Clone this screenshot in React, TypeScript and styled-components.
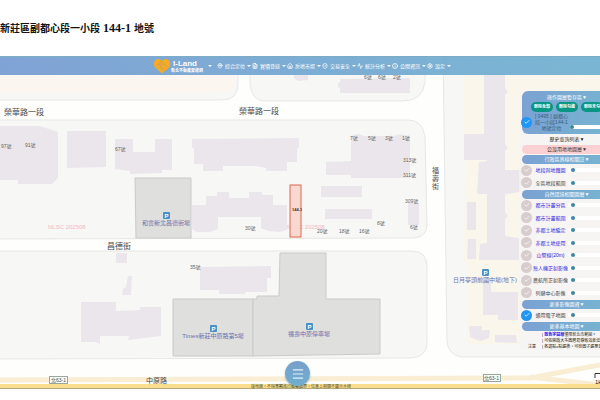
import React from "react";
import styled, { createGlobalStyle, css } from "styled-components";
import { MapPin, FileText, House, ShieldCheck, Activity, Info, Settings, Check, Menu } from "lucide-react";

const GlobalStyle = createGlobalStyle`
  * { box-sizing: border-box; }
  body { margin: 0; background: #fff; overflow-x: hidden; }
  body, button, input { font-family: "Liberation Sans", "Noto Sans CJK TC", sans-serif; }
`;

const blend = "linear-gradient(100deg, #7ba1d3, #76b5d1)";

const Page = styled.main`
  overflow: hidden;
`;

const Title = styled.h1`
  margin: 0;
  padding: 20px 0;
  height: 56px;
  font: bold 10px/16px "Liberation Serif", "Noto Sans CJK TC", serif;
  color: #111;
  white-space: nowrap;
`;

const Parcel = styled.span`
  font-size: 12px;
`;

const MapFrame = styled.section`
  position: relative;
  overflow: hidden;
`;

const MapDrawing = styled.svg`
  display: block;
  width: 100%;
  height: auto;
  font-family: "Liberation Sans", "Noto Sans CJK TC", sans-serif;
`;

const TopBar = styled.header`
  position: absolute;
  inset: 0 0 auto;
  height: 19px;
  display: flex;
  align-items: center;
  padding-left: 153px;
  color: #fff;
  background: linear-gradient(90deg, #7ba0d4, #75b4d2);
  border-top: 1px solid #78a9c4;
  opacity: 0.96;
`;

const Brand = styled.a`
  display: flex;
  align-items: center;
  color: #fff;
  text-decoration: none;
  width: 54px;
`;

const BrandText = styled.span`
  display: grid;
  font: bold 4px/5px "Liberation Sans", "Noto Sans CJK TC", sans-serif;
  white-space: nowrap;
`;

const BrandName = styled.strong`
  padding-left: 2px;
  font-size: 8px;
  line-height: 9px;
`;

const Nav = styled.nav`
  display: flex;
  align-items: center;
`;

const NavButton = styled.button`
  display: flex;
  align-items: center;
  gap: 2px;
  width: 35px;
  padding: 0;
  border: 0;
  background: none;
  color: #fff;
  font-size: 5px;
  line-height: 8px;
  white-space: nowrap;
`;

const Caret = styled.span`
  border: 1px solid transparent;
  border-top: 2px solid #fff;
  border-bottom: 0;
  border-left-width: 2px;
  border-right-width: 2px;
`;

const BrandCaret = styled(Caret)`
  margin: 0 5px 0 1px;
`;

const Panel = styled.aside`
  position: absolute;
  top: 35px;
  right: -12px;
  width: 90px;
  border-radius: 6px;
  background: rgba(245, 244, 243, 0.82);
  box-shadow: -3px 0 0 rgba(245, 244, 243, 0.7);
  color: #333;
  font-size: 5px;
  line-height: 6px;
`;

const Working = styled.div`
  border-radius: 6px;
  background: ${blend};
  height: 43px;
  padding-top: 1px;
`;

const tones = {
  blue: css`background: ${blend}; color: #fff;`,
  clear: css`color: #fff;`,
  pink: css`background: #fcd0d2; color: #333;`,
  plain: css`color: #222;`,
};

const Heading = styled.button<{ $tone: keyof typeof tones }>`
  display: block;
  width: 100%;
  height: 9px;
  margin-top: 1px;
  padding: 0;
  border: 0;
  border-radius: 5px;
  background: none;
  font-size: 5px;
  line-height: 9px;
  text-align: center;
  white-space: nowrap;
  ${(p) => tones[p.$tone]}
`;

const Actions = styled.div`
  display: flex;
  justify-content: center;
  gap: 3px;
`;

const ClearButton = styled.button`
  width: 22px;
  height: 10px;
  padding: 0;
  border: 0;
  border-radius: 5px;
  background: #079683;
  color: #fff;
  font-size: 4px;
  line-height: 10px;
  font-weight: bold;
  white-space: nowrap;
`;

const Rows = styled.div<{ $height: number }>`
  display: flex;
  flex-direction: column;
  min-height: ${(p) => p.$height}px;
`;

const Row = styled.div<{ $tall?: boolean }>`
  flex: 1;
  display: grid;
  grid-template-columns: 12px ${(p) => (p.$tall ? "35px" : "33px")} 1fr;
  column-gap: 1px;
  align-items: center;
  margin-left: -1px;
  min-height: ${(p) => (p.$tall ? 20 : 12)}px;
`;

const RowLabel = styled.label<{ $link?: boolean; $wrap?: boolean }>`
  justify-self: center;
  text-align: center;
  white-space: ${(p) => (p.$wrap ? "pre" : "nowrap")};
  color: ${(p) => (p.$link ? "#2a1fe0" : p.$wrap ? "#3d5877" : "#444")};
`;

const Tick = styled.span`
  display: grid;
  width: 11px;
  height: 11px;
  > * { grid-area: 1 / 1; place-self: center; }
  svg { pointer-events: none; z-index: 1; }
`;

const TickBox = styled.input`
  appearance: none;
  width: 11px;
  height: 11px;
  margin: 0;
  border-radius: 50%;
  background: #d8cdcd;
  &:checked { background: #2196f3; }
`;

const Slider = styled.input<{ $low?: boolean }>`
  appearance: none;
  align-self: ${(p) => (p.$low ? "end" : "center")};
  width: 100%;
  height: 4px;
  margin: ${(p) => (p.$low ? "0 0 3px" : "0")};
  border-radius: 2px;
  background: #fff;
  &::-webkit-slider-thumb {
    appearance: none;
    width: 4px;
    height: 4px;
    border-radius: 50%;
    background: #3b87a3;
  }
`;

const Notes = styled.div`
  display: grid;
  grid-template-columns: 20px 1fr;
  align-items: end;
  padding-top: 1px;
  font-size: 4px;
  color: #222;
  white-space: nowrap;
`;

const NotesTitle = styled.span`
  text-align: center;
`;

const NoteLink = styled.a`
  color: #1d12ee;
  font-weight: bold;
  text-decoration: none;
`;

const MenuButton = styled.button`
  position: absolute;
  bottom: 3px;
  left: 50%;
  display: grid;
  place-items: center;
  width: 25px;
  height: 25px;
  margin-left: -15px;
  padding: 0;
  border: 0;
  border-radius: 50%;
  background: linear-gradient(#779fcb, #70aecf);
  color: #dff2fb;
  box-shadow: 0 1px 2px rgba(60, 90, 120, 0.5);
`;

const nav = [
  { text: "綜合定位", Icon: MapPin },
  { text: "實價登錄", Icon: FileText },
  { text: "房地市場", Icon: House },
  { text: "交易安全", Icon: ShieldCheck },
  { text: "統計分析", Icon: Activity },
  { text: "公開資訊", Icon: Info },
  { text: "設定", Icon: Settings },
];

type Layer = { name: string; link?: boolean; on?: boolean; wrap?: boolean };

const boundaryLayers: Layer[] = [{ name: "地段與地籍圖", link: true }, { name: "全區地段範圍" }];
const planLayers: Layer[] = [
  { name: "都市計畫分區", link: true },
  { name: "都市計畫範圍", link: true },
  { name: "非都土地編定", link: true },
  { name: "非都土地使用", link: true },
  { name: "山警線(20m)", link: true },
  { name: "無人機正射影像", link: true },
  { name: "農航所正射影像" },
  { name: "列健中心影像" },
];

const buildings = [
  "0,126 40,126 58,132 58,178 52,184 18,184 18,180 0,180",
  "67,131 106,131 106,167 67,168",
  "115,139 133,139 133,152 155,152 155,139 172,139 172,170 162,170 162,173 130,174 130,171 115,169",
  "192,139 299,138 299,148 297,148 297,162 287,162 287,171 266,171 266,168 255,166 223,166 223,171 203,171 203,164 194,164 194,148 192,148",
  "192,205 206,205 206,196 217,196 217,192 229,192 229,198 249,198 249,192 262,192 262,195 273,195 273,205 287,205 287,230 280,232 268,231 261,228 261,217 218,217 218,229 210,232 197,232 192,229",
  "351,136 358,134 364,136 394,136 400,134 410,136 410,178 351,178 351,175 326,175 326,162 351,161",
  "321,186 362,186 362,197 321,197",
  "325,209 372,209 372,219 325,219",
  "408,203 419,203 419,225 408,225",
  "116,253 127,253 127,263 116,263",
  "128,276 132,276 131,295 122,295 123,289 126,287",
  "81,302 116,302 116,311 140,310 140,307 161,307 161,336 128,340 129,336 100,336 100,344 95,342 81,342",
  "200,267 271,266 271,278 267,278 267,292 245,292 245,294 219,294 219,290 200,290",
  "340,79 410,78 410,93 340,93 340,88 338,87 338,83 340,82",
  "294,75 308,75 308,80 298,81 294,78",
  "484,56 505,56 505,88 508,92 505,95 505,144 508,148 505,151 505,170 521,170 521,192 505,194 505,212 508,216 505,219 505,236 519,238 519,260 479,260 480,244 487,243 487,194 477,194 479,162 487,161 487,160 464,160 464,134 484,134",
  "467,202 476,202 476,230 467,230",
  "468,239 476,239 476,259 467,259",
  "483,281 491,281 491,292 518,292 518,320 498,320 498,315 483,315",
  "469,326 482,326 482,330 490,330 489,338 480,341 470,337",
  "495,335 516,335 517,343 495,342",
];

const houses: [number, number, string][] = [
  [1, 148, "97號"], [25, 147, "91號"], [115, 151, "67號"], [245, 230, "30號"],
  [350, 140, "7號"], [368, 140, "5號"], [385, 140, "3號"], [402, 140, "1號"],
  [403, 162, "313號"], [403, 177, "311號"], [405, 203, "309號"], [410, 229, "6號"],
  [377, 225, "8號"], [317, 233, "20號"], [339, 233, "18號"], [359, 233, "16號"],
  [190, 269, "35號"], [364, 79, "6號"], [378, 79, "6號"], [393, 79, "2號"],
];

const parkings: [number, number, string][] = [
  [166, 216, "和雲新北昌德街場"],
  [213, 329, "Times新莊中原路第5場"],
  [309, 327, "福壽中原停車場"],
  [485, 273, "日月亭頭前國中場(地下)"],
];

function LayerRow({ name, link, on, wrap }: Layer) {
  const id = React.useId();
  return (
    <Row $tall={wrap}>
      <Tick>
        <TickBox id={id} type="checkbox" defaultChecked={on} />
        <Check size={6} color="#fff" strokeWidth={3} />
      </Tick>
      <RowLabel htmlFor={id} $link={link} $wrap={wrap}>{name}</RowLabel>
      <Slider type="range" $low={wrap} defaultValue={wrap ? 0 : 8} aria-label={name + " 透明度"} />
    </Row>
  );
}

function StreetMap() {
  return (
    <MapDrawing viewBox="0 56 600 333" role="img" aria-label="街道地圖">
      <rect y="56" width="600" height="333" fill="#fefefd" />
      <g fill="#f7f7f6" stroke="#e7e7e5" strokeWidth="1">
        <path d="M-5 50H238V84Q238 100 222 100H-5Z" />
        <path d="M250 50H425V82Q423 101 403 101H265Q252 101 250 84Z" />
        <path d="M-5 120H408Q423 120 425 137L427 224Q427 238 413 238L-5 239Z" />
        <path d="M-5 251H412Q427 251 427 267V342Q427 357 411 358L-5 359Z" />
        <path d="M443 50H606V357H462Q448 355 447 341Z" />
      </g>
      <path d="M0 56H236V80Q232 93 217 93H0Z" fill="#fbf6ef" />
      <path d="M464 56H600V130H520V344H467V262H464V235L466 160H464Z" fill="#faf6ec" />
      <g fill="#ebe6eb">
        {buildings.map((points) => <polygon key={points} points={points} />)}
      </g>
      <g fill="#dfdfde" stroke="#c9cacb" strokeWidth="1">
        <path d="M135 178H191V238H136Z" />
        <path d="M173 299H253V356H173Z" />
        <path d="M253 299H257V296H279L280 253H326V299H380V354L253 356Z" />
      </g>
      <g stroke="#f9edd3" fill="none" strokeWidth="5">
        <path d="M0 380L530 378L600 365" />
        <path d="M530 377L600 385" />
      </g>
      <rect y="384" width="600" height="5" fill="#f9df8d" />
      <path d="M0 388.5H600" stroke="#b5a778" />

      <g fill="#f1b9c3" fontSize="6">
        <text x="48" y="229">NLSC 202508</text>
        <text x="287" y="229">NLSC 202508</text>
      </g>
      <rect x="290" y="185" width="11" height="52" fill="#f8d3cb" fillOpacity="0.85" stroke="#e2674d" />
      <text x="292" y="211" fontSize="4" fontWeight="bold" fill="#4a2a1e">144-1</text>
      <g fill="#666" fontSize="5">
        {houses.map(([x, y, text]) => <text key={`${x}-${y}`} x={x} y={y}>{text}</text>)}
      </g>
      <g fill="#4a4a4a">
        <g fontSize="8">
          <text x="4" y="115">榮華路一段</text>
          <text x="239" y="114">榮華路一段</text>
          <text x="107" y="249">昌德街</text>
        </g>
        <g fontSize="7">
          <text x="146" y="383">中原路</text>
          <text x="432" y="173">福</text>
          <text x="432" y="181">壽</text>
          <text x="432" y="189">街</text>
        </g>
      </g>
      {parkings.map(([x, y, text]) => (
        <g key={text} textAnchor="middle">
          <rect x={x - 3} y={y - 4} width="7" height="7" rx="1" fill="#4a8fc6" />
          <text x={x + 0.5} y={y + 2} fontSize="6" fontWeight="bold" fill="#fff">P</text>
          <text x={x} y={y + 9} fontSize="6" fill="#6b70ae">{text}</text>
        </g>
      ))}
      <g fill="#fafdf9" stroke="#9aa59b" strokeWidth="1">
        <rect x="49.5" y="376.5" width="18" height="7" />
        <rect x="483.5" y="374.5" width="17" height="7" />
      </g>
      <g fill="#465246" fontSize="5">
        <text x="51" y="382">北63-1</text>
        <text x="484" y="380">北63-1</text>
      </g>
      <path d="M595 378V373.5H600" fill="none" stroke="#333" />
      <text x="595" y="384" fontSize="6" fill="#222">1km</text>
      <text x="251" y="388" fontSize="4" fill="#55491f">接地籍，不得單獨進行產權鑑界，位置上相關不顯示水線</text>
    </MapDrawing>
  );
}

function Logo() {
  return (
    <svg width="18" height="16" viewBox="0 0 36 32" aria-hidden="true">
      <path d="M18 31L4 19Q-1 12 4 5Q11-1 18 6Q25-1 32 5Q37 12 32 19Z" fill="#f5a81c" />
      <path d="M9 14L16 7L22 12L29 18M5 18L12 12L23 23M9 22L14 17L20 26M18 6L12 13Q16 17 20 12" fill="none" stroke="#c99b55" strokeWidth="1.5" />
    </svg>
  );
}

export default function App() {
  return (
    <Page>
      <GlobalStyle />
      <Title>新莊區副都心段一小段<Parcel> 144-1 </Parcel>地號</Title>
      <MapFrame>
        <StreetMap />
        <TopBar>
          <Brand href="#">
            <Logo />
            <BrandText>
              <BrandName>I-Land</BrandName>
              新北不動產愛連網
            </BrandText>
          </Brand>
          <Nav>
            <BrandCaret />
            {nav.map(({ text, Icon }) => (
              <NavButton key={text}>
                <Icon size={6} strokeWidth={3} />
                {text}
                <Caret />
              </NavButton>
            ))}
          </Nav>
        </TopBar>
        <Panel>
          <Working>
            <Heading $tone="clear">操作圖層暫存區▼</Heading>
            <Actions>
              <ClearButton>刪除全部</ClearButton>
              <ClearButton>刪除勾選</ClearButton>
              <ClearButton>刪除未勾</ClearButton>
            </Actions>
            <LayerRow name={"[ 0495 ] 副都心\n段一小段144-1\n地號定位"} on wrap />
          </Working>
          <Heading $tone="plain">歷史查詢列表▼</Heading>
          <Heading $tone="pink">公設用地地圖層▼</Heading>
          <Heading $tone="blue">行政區界線相關註▼</Heading>
          <Rows $height={25}>
            {boundaryLayers.map((layer) => <LayerRow key={layer.name} {...layer} />)}
          </Rows>
          <Heading $tone="blue">自然環境相關圖層▼</Heading>
          <Rows $height={100}>
            {planLayers.map((layer) => <LayerRow key={layer.name} {...layer} />)}
          </Rows>
          <Heading $tone="blue">更多影像圖資▼</Heading>
          <LayerRow name="通用電子地圖" on />
          <Heading $tone="blue">更多基本地圖▼</Heading>
          <Notes>
            <NotesTitle>注意</NotesTitle>
            <div>
              <div>| <NoteLink href="#">藍色字圖層</NoteLink>僅限新北市範圍。</div>
              <div>| 可依開啟大多圖層易導致效能低落</div>
              <div>| 各項點x點選後，可從圖子選單查看</div>
            </div>
          </Notes>
        </Panel>
        <MenuButton aria-label="選單"><Menu size={14} strokeWidth={2} /></MenuButton>
      </MapFrame>
    </Page>
  );
}
